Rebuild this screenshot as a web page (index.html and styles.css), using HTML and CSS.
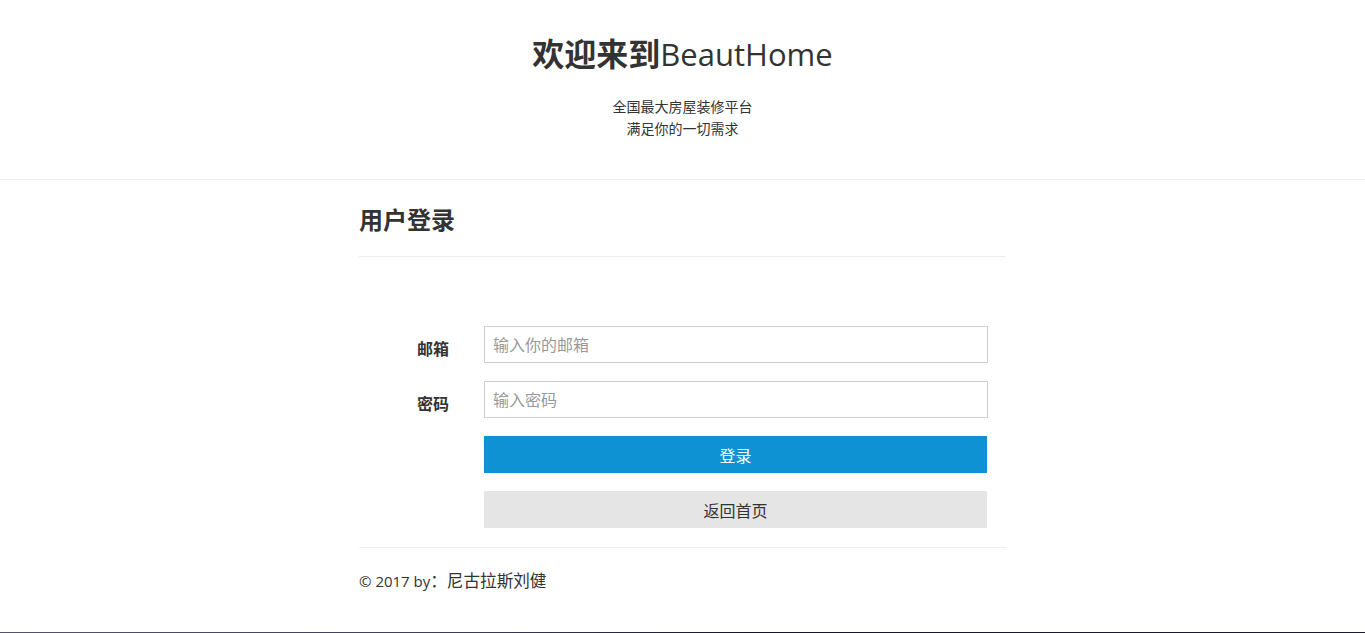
FILE: index.html
```html
<!DOCTYPE html>
<html lang="zh">
<head>
<meta charset="utf-8">
<title>用户登录</title>
<link rel="stylesheet" href="styles.css">
</head>
<body>
<header class="hero">
  <h1 class="hero-title"><span class="cn">欢迎来到</span>BeautHome</h1>
  <p class="hero-sub">全国最大房屋装修平台<br>满足你的一切需求</p>
</header>
<main class="container">
  <h2 class="page-title">用户登录</h2>
  <form class="login-form">
    <div class="form-row">
      <label class="form-label" for="email">邮箱</label>
      <input class="form-input" id="email" type="text" placeholder="输入你的邮箱">
    </div>
    <div class="form-row">
      <label class="form-label" for="pwd">密码</label>
      <input class="form-input" id="pwd" type="password" placeholder="输入密码">
    </div>
    <div class="form-row">
      <span class="form-label"></span>
      <button class="btn btn-primary" type="button">登录</button>
    </div>
    <div class="form-row">
      <span class="form-label"></span>
      <button class="btn btn-default" type="button">返回首页</button>
    </div>
  </form>
  <footer class="footer">© 2017 by<span class="cn">：尼古拉斯刘健</span></footer>
</main>
<div class="bottom-band"></div>
</body>
</html>
```
FILE: styles.css
```css
* { box-sizing: border-box; }
html, body { margin: 0; padding: 0; }
body {
  font-family: "Open Sans", "Noto Sans CJK SC", sans-serif;
  color: #333;
  background: #fff;
  height: 633px;
  overflow: hidden;
  position: relative;
}
.hero {
  text-align: center;
  padding-top: 33px;
  height: 180px;
  border-bottom: 1px solid #eee;
}
.hero-title {
  margin: 0;
  font-size: 31px;
  line-height: 42px;
  font-weight: 400;
  color: #333;
}
.hero-title .cn { font-weight: 700; font-size: 32px; }
.hero-sub {
  margin: 21px 0 0;
  font-size: 14px;
  line-height: 22px;
}
.container {
  width: 647px;
  margin: 0 auto;
}
.page-title {
  margin: 0;
  padding-top: 23px;
  height: 77px;
  font-size: 24px;
  line-height: 34px;
  font-weight: 700;
  border-bottom: 1px solid #eee;
}
.login-form {
  padding-top: 69px;
  padding-bottom: 19px;
  display: flex;
  flex-direction: column;
  gap: 18px;
  border-bottom: 1px solid #eee;
}
.form-row {
  display: flex;
  align-items: flex-start;
}
.form-label {
  width: 125px;
  flex: none;
  padding-right: 35px;
  text-align: right;
  font-size: 16px;
  font-weight: 700;
  line-height: 24px;
  padding-top: 11px;
}
.form-input {
  width: 504px;
  height: 37px;
  border: 1px solid #ccc;
  border-radius: 0;
  padding: 0 8px;
  font-family: inherit;
  font-size: 16px;
  color: #555;
  outline: none;
}
.form-input::placeholder { color: #999; }
.btn {
  width: 503px;
  height: 37px;
  border: 0;
  border-radius: 0;
  font-family: inherit;
  font-size: 16px;
  cursor: pointer;
}
.btn-primary { background: #0f92d4; color: #fff; }
.btn-default { background: #e5e5e5; color: #333; }
.footer {
  padding-top: 22px;
  font-size: 15px;
  line-height: 22px;
}
.footer .cn { font-size: 16.6px; }
.bottom-band {
  position: absolute;
  left: 0;
  right: 0;
  bottom: 0;
  height: 1px;
  background: linear-gradient(90deg, #55526a 0%, #3c3b55 35%, #15142a 55%, #1b1a30 100%);
}
```
